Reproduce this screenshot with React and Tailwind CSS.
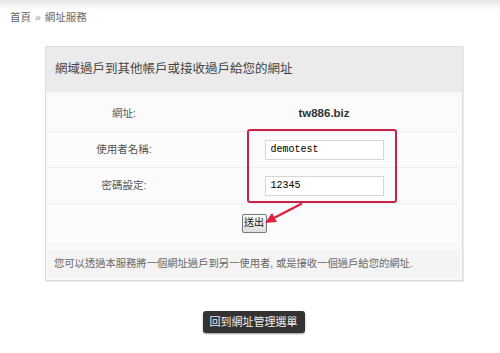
export default function App() {
  const font = { fontFamily: '"Liberation Sans", "Noto Sans CJK TC", sans-serif' };
  const mono = { fontFamily: '"Liberation Mono", monospace' };
  return (
    <div className="relative h-[353px] w-[500px] overflow-hidden bg-white" style={font}>
      <div className="h-[10px] bg-gradient-to-b from-[#e6e6e6] to-white" />

      {/* Breadcrumb */}
      <div className="flex h-[14px] items-center pl-[10px] text-[10.5px] leading-none text-[#666]">
        <span>首頁</span>
        <span className="mx-[4px] text-[#999]">»</span>
        <span>網址服務</span>
      </div>

      {/* Panel */}
      <div className="ml-[45px] mt-[22px] w-[418px] border border-[#dcdcdc] bg-[#f9f9f9] shadow-[1px_1px_0_#ececec]">
        <div className="flex h-[45px] items-center bg-[#ebebeb] pl-[9px] text-[12.5px] text-[#444]">
          網域過戶到其他帳戶或接收過戶給您的網址
        </div>

        <div className="mx-[2px] mt-[4px]">
          <div className="flex h-[36px] items-center border-b border-[#f0f0f0] bg-[#fbfbfb]">
            <div className="flex w-[152px] justify-center text-[10.5px] text-[#555]">網址:</div>
            <div className="flex w-[248px] justify-center text-[11.5px] font-bold text-[#333]">tw886.biz</div>
          </div>
          <div className="flex h-[36px] items-center border-b border-[#f0f0f0] bg-[#fbfbfb]">
            <div className="flex w-[152px] justify-center text-[10.5px] text-[#555]">使用者名稱:</div>
            <div className="flex w-[248px] justify-center">
              <div className="flex h-[20px] w-[119px] items-center border border-[#d6d6d6] bg-white pl-[5px] text-[10px] text-black" style={mono}>
                demotest
              </div>
            </div>
          </div>
          <div className="flex h-[36px] items-center border-b border-[#f0f0f0] bg-[#fbfbfb]">
            <div className="flex w-[152px] justify-center text-[10.5px] text-[#555]">密碼設定:</div>
            <div className="flex w-[248px] justify-center">
              <div className="flex h-[20px] w-[119px] items-center border border-[#d6d6d6] bg-white pl-[5px] text-[10px] text-black" style={mono}>
                12345
              </div>
            </div>
          </div>
          <div className="flex h-[38px] items-center justify-center bg-[#fbfbfb]">
            <button className="h-[19px] w-[25px] rounded-[2px] border border-[#707c88] bg-gradient-to-b from-[#fafafa] to-[#dedede] text-[10px] leading-none text-[#111]">
              送出
            </button>
          </div>
        </div>

        <div className="mx-[2px] mb-[2px] mt-[8px] flex h-[28px] items-center bg-[#f4f4f4] pl-[6px] text-[10.3px] text-[#666]">
          您可以透過本服務將一個網址過戶到另一使用者, 或是接收一個過戶給您的網址.
        </div>
      </div>

      {/* Back button */}
      <div className="mt-[30px] flex justify-center">
        <button className="ml-[7px] h-[22px] w-[102px] rounded-[3px] bg-[#333] text-[11px] text-[#eee] shadow-[0_1px_2px_rgba(0,0,0,0.4)]">
          回到網址管理選單
        </button>
      </div>

      {/* Red highlight box */}
      <div className="absolute left-[247px] top-[129px] h-[74px] w-[150px] rounded-[3px] border-2 border-[#c9224a]" />

      {/* Arrow */}
      <svg className="absolute left-0 top-0" width="500" height="353" viewBox="0 0 500 353">
        <line x1="301" y1="204" x2="272" y2="219" stroke="#e0203f" strokeWidth="2.5" strokeLinecap="round" />
        <polygon points="265,223 272,213 277,222" fill="#e0203f" />
      </svg>
    </div>
  );
}
